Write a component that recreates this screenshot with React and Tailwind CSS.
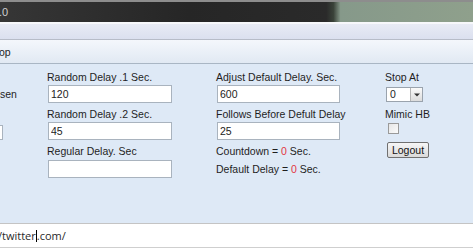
import React from 'react';

function Field({ label, value, width = 'w-[124px]' }) {
  return (
    <div className="flex flex-col">
      <div className="leading-[12px] h-[12px] whitespace-nowrap">{label}</div>
      <input
        type="text"
        readOnly
        value={value}
        className={`${width} h-[18px] mt-[2px] ml-[1px] px-[2px] bg-white border border-[#a9b3be] text-[10.5px] text-[#222] outline-none`}
      />
    </div>
  );
}

export default function App() {
  return (
    <div className="w-[473px] h-[248px] overflow-hidden flex flex-col font-['Liberation_Sans',Arial,sans-serif] text-[10.5px] text-[#1e1e1e]">
      {/* window title */}
      <div className="h-[22px] shrink-0 border-t-[2px] border-[#8d8d8d] bg-[linear-gradient(to_right,#363636_0%,#262626_40%,#2a2a2a_69%,#3a4239_70.5%,#86998a_72%,#8fa08c_100%)] flex items-center">
        <span className="-ml-[1px] text-[11px] text-[#cfcfcf] leading-none">.0</span>
      </div>
      <div className="h-[2px] shrink-0 bg-[#f7f8fb]" />
      <div className="h-[16px] shrink-0 bg-[linear-gradient(to_bottom,#e8ebf5,#dbe0ef)] border-b border-[#b7bcc8]" />
      {/* menu */}
      <div className="h-[24px] shrink-0 bg-[linear-gradient(to_bottom,#f4f7fc,#e1e9f3)] border-b border-[#a9b6c4] flex items-center">
        <span className="-ml-[1px] leading-none pt-[1px]">op</span>
      </div>

      {/* content */}
      <div className="flex-1 bg-[#dee9f6] flex pt-[7px]">
        <div className="w-[47px] shrink-0 flex flex-col overflow-hidden pt-[17px]">
          <div className="leading-[12px] h-[12px]">sen</div>
          <div className="w-[120px] h-[15px] -ml-[117px] mt-[25px] bg-white border border-[#a9b3be]" />
        </div>

        <div className="w-[169px] shrink-0 flex flex-col">
          <Field label="Random Delay .1 Sec." value="120" />
          <div className="mt-[5px]">
            <Field label="Random Delay .2 Sec." value="45" />
          </div>
          <div className="mt-[5px] flex flex-col">
            <div className="leading-[12px] h-[12px]">Regular Delay. Sec</div>
            <input
              type="text"
              readOnly
              value=""
              className="w-[124px] h-[18px] mt-[3px] ml-[1px] bg-white border border-[#a9b3be] outline-none"
            />
          </div>
        </div>

        <div className="w-[169px] shrink-0 flex flex-col">
          <Field label="Adjust Default Delay. Sec." value="600" width="w-[123px]" />
          <div className="mt-[5px]">
            <Field label="Follows Before Defult Delay" value="25" width="w-[123px]" />
          </div>
          <div className="mt-[5px] leading-[12px] h-[12px]">
            Countdown = <span className="text-[#e3343f]">0</span> Sec.
          </div>
          <div className="mt-[6px] leading-[12px] h-[12px]">
            Default Delay = <span className="text-[#e3343f]">0</span> Sec.
          </div>
        </div>

        <div className="flex flex-col items-start">
          <div className="leading-[12px] h-[12px]">Stop At</div>
          <div className="mt-[4px] ml-[1px] w-[37px] h-[15px] bg-white border border-[#9aa3ad] flex">
            <span className="flex-1 pl-[3px] leading-[13px]">0</span>
            <span className="w-[12px] h-[13px] bg-[linear-gradient(to_bottom,#fafafa,#dcdcdc)] border-l border-[#b5b5b5] flex items-center justify-center">
              <svg width="6" height="4" viewBox="0 0 6 4">
                <path d="M0 0.5 L6 0.5 L3 3.5 Z" fill="#333" />
              </svg>
            </span>
          </div>
          <div className="mt-[6px] leading-[12px] h-[12px]">Mimic HB</div>
          <div className="mt-[3px] ml-[3px] w-[11px] h-[11px] border border-[#9a9a9a] bg-[linear-gradient(135deg,#e6e6e6,#fbfbfb)]" />
          <button className="mt-[8px] ml-[2px] w-[42px] h-[16px] rounded-[2px] border border-[#707070] bg-[linear-gradient(to_bottom,#f6f6f6,#dadada)] text-[10.5px] leading-[13px] text-[#111]">
            Logout
          </button>
        </div>
      </div>

      {/* address bar */}
      <div className="h-[25px] shrink-0 bg-white border-t border-[#c4c4c4] border-b border-b-[#cfcfcf] flex items-center">
        <span className="-ml-[2px] text-[11px] text-[#2a2a2a] font-['Open_Sans',sans-serif] leading-none flex items-center">
          /twitter<span className="inline-block w-px h-[12px] bg-black" />.com/
        </span>
      </div>
    </div>
  );
}
